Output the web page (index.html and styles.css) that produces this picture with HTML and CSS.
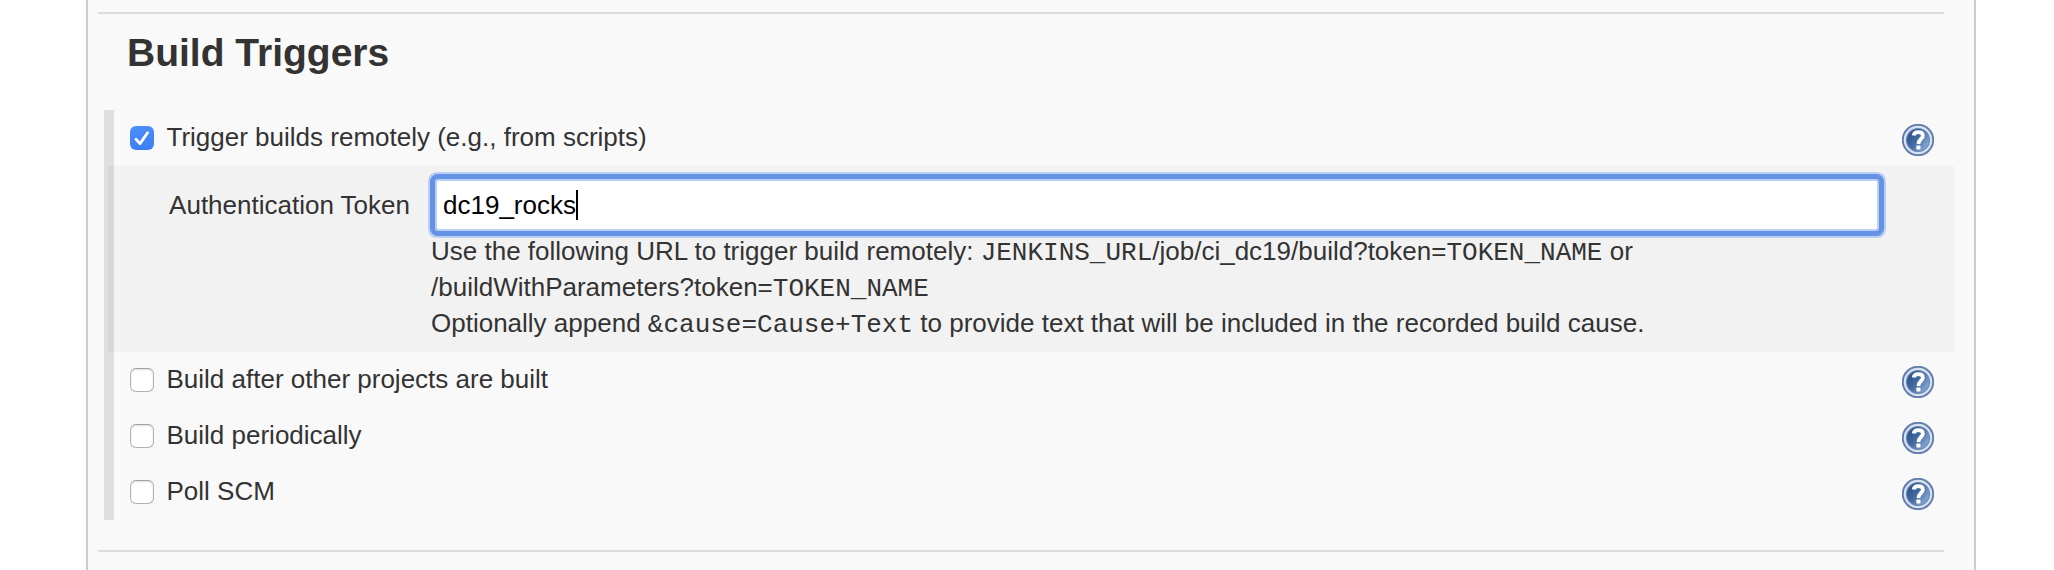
FILE: index.html
```html
<!DOCTYPE html>
<html lang="en">
<head>
<meta charset="utf-8">
<title>Build Triggers</title>
<link rel="stylesheet" href="styles.css">
</head>
<body>
<svg class="defs" width="0" height="0" aria-hidden="true">
  <defs>
    <linearGradient id="disc" x1="0" y1="0.2" x2="1" y2="0.9">
      <stop offset="0" stop-color="#2a4f8c"/>
      <stop offset="0.45" stop-color="#456ba5"/>
      <stop offset="1" stop-color="#9dbade"/>
    </linearGradient>
    <symbol id="help" viewBox="0 0 32 32">
      <circle cx="16" cy="16" r="15.2" fill="#d9e3f1" stroke="#5f7cab" stroke-width="1.900"/>
      <circle cx="16" cy="16" r="11.500" fill="url(#disc)" stroke="#6c88b5" stroke-width="1.200"/>
      <path d="M11.700 11.600C12 9.200 13.700 8.200 16.300 8.200C19 8.200 20.900 9.400 20.900 11.700C20.900 14.800 16.500 15.300 16.500 20" fill="none" stroke="#fff" stroke-width="3.700"/>
      <rect x="14.300" y="21.600" width="4.200" height="4" rx="1" fill="#fff"/>
    </symbol>
  </defs>
</svg>
<main class="panel">
  <section class="section">
    <h2 class="title">Build Triggers</h2>
    <div class="triggers">
      <div class="row">
        <span class="box checked"><svg viewBox="0 0 24 24"><path d="M6 13.200L10 17.600L17.600 6.800" fill="none" stroke="#fff" stroke-width="2.800" stroke-linecap="round" stroke-linejoin="round"/></svg></span>
        <span class="name">Trigger builds remotely (e.g., from scripts)</span>
        <svg class="help"><use href="#help"/></svg>
      </div>
      <div class="details">
        <div class="label">Authentication Token</div>
        <div class="setting">
          <div class="field"><span>dc19_rocks</span><i class="caret"></i></div>
          <div class="hint">Use the following URL to trigger build remotely: <code>JENKINS_URL</code>/job/ci_dc19/build?token=<code>TOKEN_NAME</code> or<br>/buildWithParameters?token=<code>TOKEN_NAME</code><br>Optionally append <code>&amp;cause=Cause+Text</code> to provide text that will be included in the recorded build cause.</div>
        </div>
      </div>
      <div class="row">
        <span class="box"></span>
        <span class="name">Build after other projects are built</span>
        <svg class="help"><use href="#help"/></svg>
      </div>
      <div class="row">
        <span class="box"></span>
        <span class="name">Build periodically</span>
        <svg class="help"><use href="#help"/></svg>
      </div>
      <div class="row">
        <span class="box"></span>
        <span class="name">Poll SCM</span>
        <svg class="help"><use href="#help"/></svg>
      </div>
    </div>
  </section>
</main>
</body>
</html>
```
FILE: styles.css
```css
* { box-sizing: border-box; }
body {
  margin: 0;
  height: 570px;
  overflow: hidden;
  background: #fff;
  color: #333;
  font: 26px/36px "Liberation Sans", Arial, sans-serif;
}
.defs { display: block; height: 0; }
.panel {
  width: 1890px;
  height: 570px;
  margin-left: 86px;
  padding: 12px 30px 0 10px;
  background: #f9f9f9;
  border: solid #ccc;
  border-width: 0 2px;
}
.section {
  width: 1846px;
  height: 540px;
  border: solid #ddd;
  border-width: 2px 0;
}
.title {
  margin: 0;
  padding: 17px 0 0 29px;
  height: 96px;
  font-size: 39px;
  line-height: 44px;
  font-weight: bold;
}
.triggers {
  width: 1850px;
  margin-left: 6px;
  background: linear-gradient(#dfdfdf, #dfdfdf) left / 10px 100% no-repeat;
}
.row {
  display: flex;
  height: 56px;
  padding: 0 20px 0 26px;
}
.box {
  width: 24px;
  height: 24px;
  margin: 16px 12.5px 0 0;
  background: #fff;
  border: 1px solid #b4b4b4;
  border-top-color: #a0a0a0;
  border-radius: 6px;
  box-shadow: inset 0 1px 2px #ddd;
}
.box.checked {
  background: linear-gradient(#4b8df8, #3e7ff6);
  border: 0;
  box-shadow: none;
}
.box svg { display: block; width: 24px; height: 24px; }
.name { flex: 1; padding-top: 9px; white-space: nowrap; }
.help { width: 32px; height: 32px; margin-top: 14px; }
.details {
  display: flex;
  height: 186px;
  margin-left: 4px;
  background: rgba(0, 0, 0, 0.028);
}
.label {
  width: 302px;
  padding-top: 21px;
  text-align: right;
  white-space: nowrap;
}
.setting { padding: 13px 0 0 21px; }
.field {
  display: flex;
  align-items: center;
  width: 1444px;
  height: 52px;
  margin-left: 4px;
  padding-left: 6px;
  background: #fff;
  border: 2px solid #b9cff4;
  border-radius: 3px;
  box-shadow: 0 0 0 5px #6692e6, 0 0 0 7px #b9cff4;
  color: #000;
}
.caret { width: 2px; height: 30px; background: #000; }
.hint { padding-top: 2px; white-space: nowrap; }
code { font: 26px/30px "Liberation Mono", "Courier New", monospace; }
```
